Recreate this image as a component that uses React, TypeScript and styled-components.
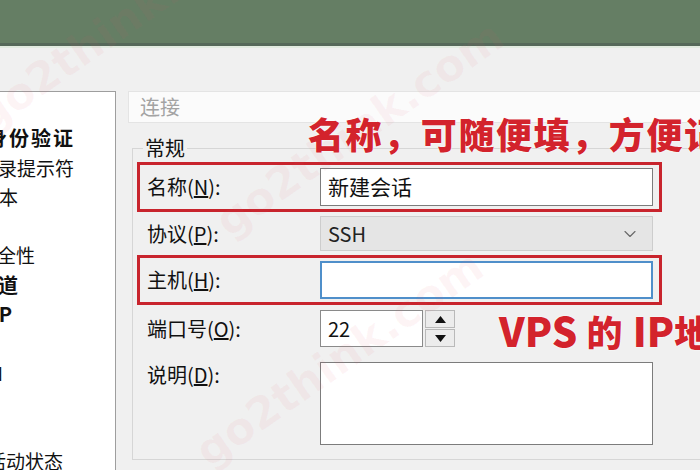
import React from "react";
import styled, { createGlobalStyle } from "styled-components";
import { ChevronDown } from "lucide-react";

const Global = createGlobalStyle`
  html, body { margin: 0; padding: 0; background: #f0f0f0; }
  body { font-family: "Noto Sans CJK SC", "Noto Sans", sans-serif; color: #111; }
  #root { width: 700px; height: 470px; overflow: hidden; }
`;

const Page = styled.div`
  position: relative;
  width: 700px;
  height: 470px;
  overflow: hidden;
  background: #f0f0f0;
  display: flex;
  flex-direction: column;
`;

const TitleBar = styled.div`
  flex: none;
  height: 43px;
  background: #657e64;
  border-bottom: 3px solid #56695a;
`;

const TitleEdge = styled.div`
  flex: none;
  height: 2px;
  background: #e2ebe0;
`;

const Main = styled.div`
  flex: 1;
  display: flex;
  padding-top: 43px;
  min-height: 0;
`;

const Tree = styled.div`
  flex: none;
  width: 115px;
  height: 400px;
  background: #fff;
  border: 1px solid #9e9e9e;
  border-left: none;
  border-bottom: none;
  padding-top: 2px;
  overflow: hidden;
  display: flex;
  flex-direction: column;
`;

const TreeItem = styled.div<{ $end: number; $bold?: boolean }>`
  height: 29.3px;
  line-height: 29.3px;
  width: ${(p) => p.$end}px;
  text-align: right;
  white-space: nowrap;
  direction: rtl;
  font-size: ${(p) => (p.$bold ? 20 : 19)}px;
  letter-spacing: ${(p) => (p.$bold ? 2 : 0)}px;
  font-weight: ${(p) => (p.$bold ? 700 : 400)};
  color: #111;
`;

const Right = styled.div`
  flex: 1;
  margin-left: 12px;
  display: flex;
  flex-direction: column;
  overflow: hidden;
`;

const Header = styled.div`
  height: 32px;
  box-sizing: border-box;
  background: #fbfbfb;
  border: 1px solid #e4e4e4;
  border-right: none;
  padding-left: 11px;
  font-size: 20px;
  line-height: 30px;
  color: #a3a3a3;
`;

const Group = styled.fieldset`
  margin: 11px 0 0 4px;
  width: 600px;
  box-sizing: border-box;
  border: 1px solid #d6d6d6;
  border-right: none;
  padding: 0 0 7px 4px;
  min-width: 0;
`;

const Legend = styled.legend`
  margin-left: 6px;
  padding: 0 2px;
  font-size: 20px;
  line-height: 28px;
  color: #111;
`;

const Row = styled.div<{ $mark?: boolean; $h: number; $top?: boolean }>`
  box-sizing: border-box;
  width: 525px;
  height: ${(p) => p.$h}px;
  border: 3px solid ${(p) => (p.$mark ? "#c8242d" : "transparent")};
  padding: ${(p) => (p.$top ? "7px" : "0")} 6px 0 7px;
  display: grid;
  grid-template-columns: 173px 333px;
  align-items: ${(p) => (p.$top ? "start" : "center")};
`;

const Label = styled.label`
  font-size: 20px;
  line-height: 26px;
  color: #111;
  white-space: nowrap;
`;

const Key = styled.span`
  text-decoration: underline;
`;

const TextBox = styled.div<{ $focus?: boolean }>`
  box-sizing: border-box;
  height: 38px;
  background: #fff;
  border: ${(p) => (p.$focus ? "2px solid #4f8fca" : "1px solid #7c7c7c")};
  padding-left: 7px;
  font-size: 21px;
  line-height: 34px;
  color: #111;
`;

const Select = styled.div`
  box-sizing: border-box;
  height: 35px;
  background: #e5e5e5;
  border: 1px solid #cdcdcd;
  padding: 0 12px 0 7px;
  display: flex;
  align-items: center;
  justify-content: space-between;
  font-size: 20px;
  color: #222;
`;

const Spin = styled.div`
  display: flex;
  align-items: center;
  gap: 2px;
`;

const PortBox = styled.div`
  box-sizing: border-box;
  width: 103px;
  height: 37px;
  background: #fff;
  border: 1px solid #8a8a8a;
  padding-left: 7px;
  font-size: 20px;
  line-height: 35px;
  color: #111;
`;

const SpinButtons = styled.div`
  display: flex;
  flex-direction: column;
  gap: 1px;
`;

const SpinButton = styled.div`
  box-sizing: border-box;
  width: 30px;
  height: 18px;
  background: #ececec;
  border: 1px solid #b9b9b9;
  display: flex;
  align-items: center;
  justify-content: center;
`;

const Memo = styled.div`
  box-sizing: border-box;
  height: 83px;
  background: #fff;
  border: 1px solid #7c7c7c;
`;

const Note = styled.div<{ $x: number; $y: number; $ls: number }>`
  position: absolute;
  left: ${(p) => p.$x}px;
  top: ${(p) => p.$y}px;
  font-size: 36px;
  line-height: 38px;
  font-weight: 900;
  letter-spacing: ${(p) => p.$ls}px;
  color: #d3232c;
  white-space: nowrap;
  text-shadow: 0 0 2px #fff, 0 0 1px #fff;
`;

const Latin = styled.span`
  font-size: 40px;
  letter-spacing: 0;
`;

const Mark = styled.div<{ $x: number; $y: number }>`
  position: absolute;
  left: ${(p) => p.$x}px;
  top: ${(p) => p.$y}px;
  font-size: 44px;
  font-weight: 700;
  font-family: "DejaVu Sans", sans-serif;
  color: rgba(225, 90, 110, 0.06);
  transform: rotate(-35deg);
  transform-origin: left center;
  white-space: nowrap;
  pointer-events: none;
`;

const Tri = ({ up }: { up?: boolean }) => (
  <svg width="11" height="7" viewBox="0 0 11 7">
    <path d={up ? "M0 7 L5.5 0 L11 7 Z" : "M0 0 L5.5 7 L11 0 Z"} fill="#111" />
  </svg>
);

const treeItems: { t: string; end: number; bold?: boolean }[] = [
  { t: "连接", end: 0 },
  { t: "用户身份验证", end: 75, bold: true },
  { t: "登录提示符", end: 74 },
  { t: "登录脚本", end: 18 },
  { t: "SSH", end: 0 },
  { t: "安全性", end: 35 },
  { t: "隧道", end: 20, bold: true },
  { t: "SFTP", end: 14, bold: true },
  { t: "TELNET", end: 0 },
  { t: "RLOGIN", end: 3 },
  { t: "串口", end: 0 },
  { t: "代理", end: 0 },
  { t: "保持活动状态", end: 63 },
];

export default function App() {
  return (
    <Page>
      <Global />
      <TitleBar />
      <TitleEdge />
      <Main>
        <Tree>
          {treeItems.map((it) => (
            <TreeItem key={it.t} $end={it.end} $bold={it.bold}>
              <bdi>{it.t}</bdi>
            </TreeItem>
          ))}
        </Tree>
        <Right>
          <Header>连接</Header>
          <Group>
            <Legend>常规</Legend>
            <Row $mark $h={50}>
              <Label>
                名称(<Key>N</Key>):
              </Label>
              <TextBox>新建会话</TextBox>
            </Row>
            <Row $h={43}>
              <Label>
                协议(<Key>P</Key>):
              </Label>
              <Select>
                <span>SSH</span>
                <ChevronDown size={20} strokeWidth={1.4} color="#6a6a6a" />
              </Select>
            </Row>
            <Row $mark $h={50}>
              <Label>
                主机(<Key>H</Key>):
              </Label>
              <TextBox $focus />
            </Row>
            <Row $h={47}>
              <Label>
                端口号(<Key>O</Key>):
              </Label>
              <Spin>
                <PortBox>22</PortBox>
                <SpinButtons>
                  <SpinButton>
                    <Tri up />
                  </SpinButton>
                  <SpinButton>
                    <Tri />
                  </SpinButton>
                </SpinButtons>
              </Spin>
            </Row>
            <Row $h={100} $top>
              <Label>
                说明(<Key>D</Key>):
              </Label>
              <Memo />
            </Row>
          </Group>
        </Right>
      </Main>
      <Mark $x={-20} $y={95}>go2think.com</Mark>
      <Mark $x={220} $y={200}>go2think.com</Mark>
      <Mark $x={200} $y={430}>go2think.com</Mark>
      <Note $x={308} $y={114} $ls={1.6}>名称，可随便填，方便记</Note>
      <Note $x={499} $y={311} $ls={1}>
        <Latin>VPS</Latin> 的 <Latin>IP</Latin>地址
      </Note>
    </Page>
  );
}
